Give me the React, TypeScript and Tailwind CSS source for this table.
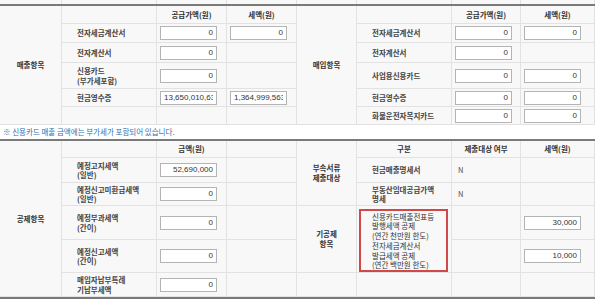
import React from 'react'

const ko = "font-['Noto_Sans_CJK_KR','Noto_Sans',sans-serif]"
const cols = 'grid-cols-[62px_95px_70px_70px_60px_95px_69px_74px]'
const cell = 'border-b border-r border-[#e2e2e2] bg-[#f8f8f8]'

// read-only amount box; long values are clipped at the right like a text input
function Amount({ value }: { value: string }) {
  return (
    <div className="h-[14px] w-[57px] border border-[#b4b4b4] bg-white px-[3px] font-['Liberation_Sans',sans-serif] text-[8px] leading-[12px] text-[#333]">
      <div className="overflow-hidden whitespace-nowrap text-right">{value}</div>
    </div>
  )
}

function ValueCell({ value }: { value?: string }) {
  return <div className={`${cell} flex items-center pl-[3px]`}>{value !== undefined && <Amount value={value} />}</div>
}

function ItemCell({ lines, leading = 'leading-[9.5px]' }: { lines: string[]; leading?: string }) {
  return (
    <div className={`${cell} flex flex-col justify-center pl-[15px] font-bold text-[#444] ${leading}`}>
      {lines.map((l) => (
        <span key={l}>{l}</span>
      ))}
    </div>
  )
}

function HeadCell({ text }: { text?: string }) {
  return <div className={`${cell} flex items-center justify-center font-bold text-[#333]`}>{text}</div>
}

function LabelCell({ lines, span }: { lines: string[]; span: string }) {
  return (
    <div className={`${cell} ${span} flex flex-col items-center justify-center font-bold leading-[10px] text-[#333]`}>
      {lines.map((l) => (
        <span key={l}>{l}</span>
      ))}
    </div>
  )
}

function TextCell({ text }: { text?: string }) {
  return <div className={`${cell} flex items-center pl-[6px] text-[#555]`}>{text}</div>
}

export default function App() {
  return (
    <div className={`h-[302px] w-[595px] overflow-hidden bg-white text-[7.5px] ${ko}`}>
      {/* tail of the table above */}
      <div className={`grid h-[4px] ${cols}`}>
        {Array.from({ length: 8 }).map((_, i) => (
          <div key={i} className="border-r border-[#e2e2e2] bg-[#f8f8f8]" />
        ))}
      </div>

      {/* 매출 / 매입 */}
      <div className={`grid border-t-2 border-[#7a7a7a] ${cols} grid-rows-[18px_19px_20px_26px_18px_18px]`}>
        <LabelCell lines={['매출항목']} span="row-span-6" />
        <HeadCell />
        <HeadCell text="공급가액(원)" />
        <HeadCell text="세액(원)" />
        <LabelCell lines={['매입항목']} span="row-span-6" />
        <HeadCell />
        <HeadCell text="공급가액(원)" />
        <HeadCell text="세액(원)" />

        <ItemCell lines={['전자세금계산서']} />
        <ValueCell value="0" />
        <ValueCell value="0" />
        <ItemCell lines={['전자세금계산서']} />
        <ValueCell value="0" />
        <ValueCell value="0" />

        <ItemCell lines={['전자계산서']} />
        <ValueCell value="0" />
        <ValueCell />
        <ItemCell lines={['전자계산서']} />
        <ValueCell value="0" />
        <ValueCell />

        <ItemCell lines={['신용카드', '(부가세포함)']} leading="leading-[10px]" />
        <ValueCell value="0" />
        <ValueCell />
        <ItemCell lines={['사업용신용카드']} />
        <ValueCell value="0" />
        <ValueCell value="0" />

        <ItemCell lines={['현금영수증']} />
        <ValueCell value="13,650,010,630" />
        <ValueCell value="1,364,999,563" />
        <ItemCell lines={['현금영수증']} />
        <ValueCell value="0" />
        <ValueCell value="0" />

        <ItemCell lines={[]} />
        <ValueCell />
        <ValueCell />
        <ItemCell lines={['화물운전자복지카드']} />
        <ValueCell value="0" />
        <ValueCell value="0" />
      </div>

      <p className="h-[14px] pl-[3px] pt-[2px] leading-[10px] text-[#2f6fb3]">
        ※ 신용카드 매출 금액에는 부가세가 포함되어 있습니다.
      </p>

      {/* 공제 / 부속서류 */}
      <div
        className={`grid border-b-2 border-t-2 border-[#7a7a7a] ${cols} grid-rows-[17px_25px_23px_34px_33px_24px]`}
      >
        <LabelCell lines={['공제항목']} span="row-span-6" />
        <HeadCell />
        <HeadCell text="금액(원)" />
        <HeadCell />
        <LabelCell lines={['부속서류', '제출대상']} span="row-span-3" />
        <HeadCell text="구분" />
        <HeadCell text="제출대상 여부" />
        <HeadCell text="세액(원)" />

        <ItemCell lines={['예정고지세액', '(일반)']} />
        <ValueCell value="52,690,000" />
        <ValueCell />
        <ItemCell lines={['현금매출명세서']} />
        <TextCell text="N" />
        <ValueCell />

        <ItemCell lines={['예정신고미환급세액', '(일반)']} />
        <ValueCell value="0" />
        <ValueCell />
        <ItemCell lines={['부동산임대공급가액', '명세']} />
        <TextCell text="N" />
        <ValueCell />

        <ItemCell lines={['예정부과세액', '(간이)']} />
        <ValueCell value="0" />
        <ValueCell />
        <LabelCell lines={['기공제', '항목']} span="row-span-2" />
        <div className={`${cell} row-span-2 pl-[2px] pr-[3px] pt-[3px]`}>
          <div className="flex h-full flex-col border-2 border-[#d24848] pl-[11px] leading-[9.5px] text-[#333]">
            <div className="flex flex-1 flex-col justify-center">
              <span>신용카드매출전표등</span>
              <span>발행세액 공제</span>
              <span>(연간 천만원 한도)</span>
            </div>
            <div className="flex flex-1 flex-col justify-center">
              <span>전자세금계산서</span>
              <span>발급세액 공제</span>
              <span>(연간 백만원 한도)</span>
            </div>
          </div>
        </div>
        <TextCell />
        <ValueCell value="30,000" />

        <ItemCell lines={['예정신고세액', '(간이)']} />
        <ValueCell value="0" />
        <ValueCell />
        <TextCell />
        <ValueCell value="10,000" />

        <ItemCell lines={['매입자납부특례', '기납부세액']} />
        <ValueCell value="0" />
        <ValueCell />
        <HeadCell />
        <HeadCell />
        <TextCell />
        <ValueCell />
      </div>
    </div>
  )
}
